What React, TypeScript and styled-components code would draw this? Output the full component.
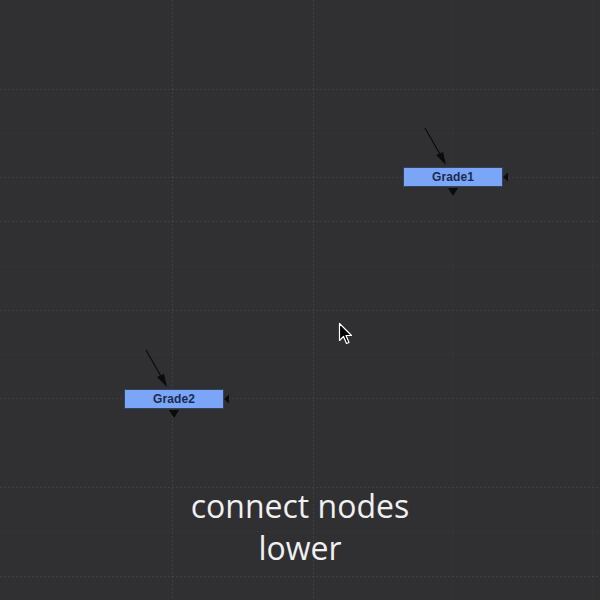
import React from "react";
import styled, { createGlobalStyle } from "styled-components";

const GlobalStyle = createGlobalStyle`
  html, body {
    margin: 0;
    padding: 0;
    background: #302f32;
  }
`;

const Canvas = styled.div`
  position: relative;
  width: 600px;
  height: 600px;
  overflow: hidden;
  background: #302f32;
  display: flex;
  flex-direction: column;
  justify-content: flex-end;
  align-items: center;
  padding-bottom: 31px;
  box-sizing: border-box;
`;

const GridLayer = styled.svg`
  position: absolute;
  inset: 0;
  pointer-events: none;
`;

const NodeWrap = styled.div`
  position: absolute;
  width: 100px;
  height: 20px;
`;

const NodeBox = styled.div`
  width: 100%;
  height: 100%;
  box-sizing: border-box;
  display: flex;
  align-items: center;
  justify-content: center;
  background: #7ba6f7;
  border: 1px solid #34425e;
  color: #1b2a4e;
  font-family: "Liberation Sans", Arial, sans-serif;
  font-weight: bold;
  font-size: 12px;
  letter-spacing: 0.1px;
`;

const Pipes = styled.svg`
  position: absolute;
  left: 0;
  top: -42px;
  overflow: visible;
  pointer-events: none;
`;

const Cursor = styled.svg`
  position: absolute;
  left: 338px;
  top: 322px;
`;

const Caption = styled.div`
  position: relative;
  font-family: "Open Sans", "Noto Sans", sans-serif;
  font-weight: 400;
  font-size: 32px;
  line-height: 42px;
  color: #f0f0f0;
  text-align: center;
`;

// strength: 2 = visible dotted line, 1 = barely there
const rows: [number, number][] = [
  [89, 2], [133, 1], [177, 2], [221, 2], [266, 1], [310, 2],
  [354, 1], [398, 2], [487, 2], [531, 1], [576, 2],
];
const cols: [number, number][] = [
  [172, 2], [313, 2], [452, 1], [592, 1],
];

const lineColor = (s: number) =>
  s === 2 ? "rgba(255,255,255,0.075)" : "rgba(255,255,255,0.035)";

const Grid = () => (
  <GridLayer width={600} height={600}>
    {rows.map(([y, s]) => (
      <line key={`r${y}`} x1={0} x2={600} y1={y + 0.5} y2={y + 0.5}
        stroke={lineColor(s)} strokeWidth={1} strokeDasharray="2 2" />
    ))}
    {cols.map(([x, s]) => (
      <line key={`c${x}`} x1={x + 0.5} x2={x + 0.5} y1={0} y2={600}
        stroke={lineColor(s)} strokeWidth={1} strokeDasharray="2 2" />
    ))}
  </GridLayer>
);

type NodeProps = { x: number; y: number; label: string };

const GraphNode: React.FC<NodeProps> = ({ x, y, label }) => (
  <NodeWrap style={{ left: x, top: y }}>
    <NodeBox>{label}</NodeBox>
    <Pipes width={110} height={75}>
      {/* incoming pipe with its arrow head */}
      <line x1={22} y1={3} x2={38} y2={31} stroke="#0b0b0c" strokeWidth={1.2} />
      <polygon points="43,40 33,30 40,27" fill="#0b0b0c" />
      {/* mask input on the right, output below */}
      <polygon points="100,52 105,47.5 105,56.5" fill="#0b0b0c" />
      <polygon points="45,63 55,63 50,71" fill="#0b0b0c" />
    </Pipes>
  </NodeWrap>
);

const App: React.FC = () => (
  <>
    <GlobalStyle />
    <Canvas>
      <Grid />
      <GraphNode x={403} y={167} label="Grade1" />
      <GraphNode x={124} y={389} label="Grade2" />
      <Cursor width={16} height={24} viewBox="0 0 16 24">
        <path
          d="M1.5 1.5 L1.5 18.5 L5.5 14.5 L8.5 21.5 L11 20.5 L8 13.5 L13.5 13.5 Z"
          fill="#000"
          stroke="#fff"
          strokeWidth={1.2}
          strokeLinejoin="round"
        />
      </Cursor>
      <Caption>
        connect nodes
        <br />
        lower
      </Caption>
    </Canvas>
  </>
);

export default App;
